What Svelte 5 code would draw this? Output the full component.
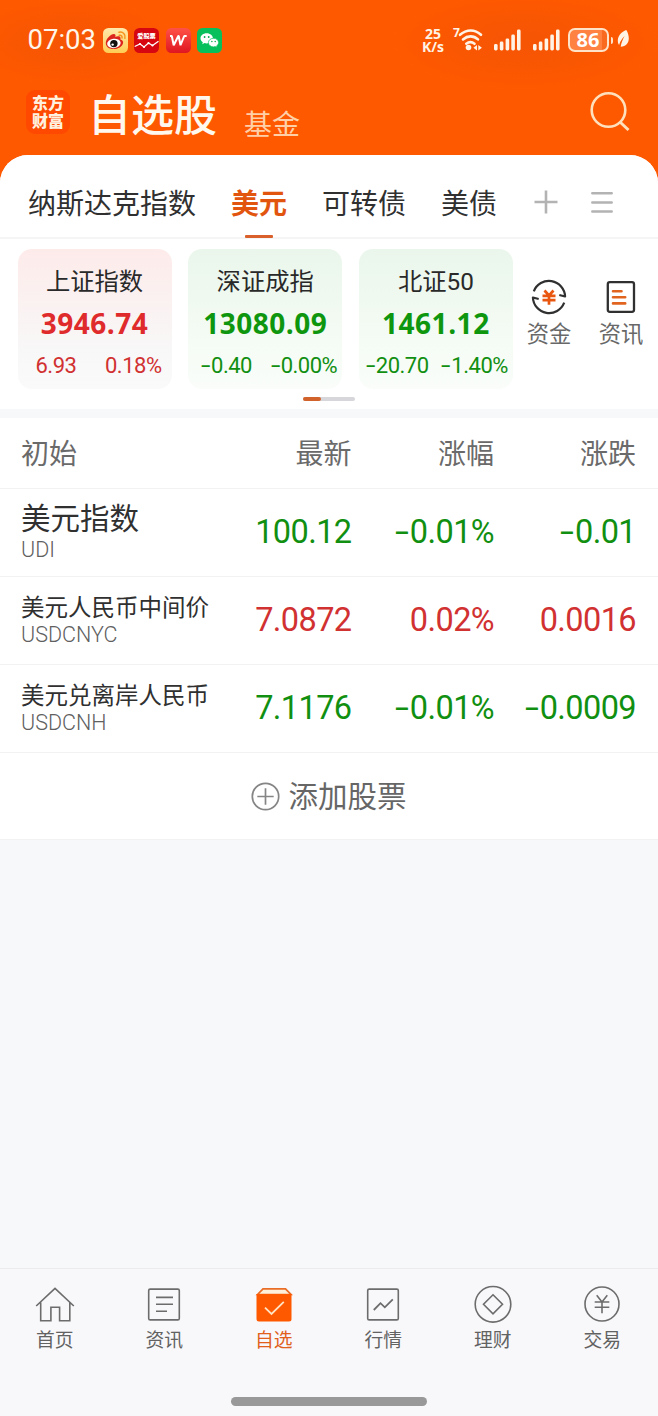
<script>
  const tabs = [
    { name: '纳斯达克指数' },
    { name: '美元', active: true },
    { name: '可转债' },
    { name: '美债' }
  ];
  const indices = [
    { name: '上证指数', value: '3946.74', diff: '6.93', pct: '0.18%', dir: 'up' },
    { name: '深证成指', value: '13080.09', diff: '-0.40', pct: '-0.00%', dir: 'down' },
    { name: '北证50', value: '1461.12', diff: '-20.70', pct: '-1.40%', dir: 'down' }
  ];
  const rows = [
    { name: '美元指数', code: 'UDI', last: '100.12', pct: '-0.01%', diff: '-0.01', dir: 'down', big: true },
    { name: '美元人民币中间价', code: 'USDCNYC', last: '7.0872', pct: '0.02%', diff: '0.0016', dir: 'up' },
    { name: '美元兑离岸人民币', code: 'USDCNH', last: '7.1176', pct: '-0.01%', diff: '-0.0009', dir: 'down' }
  ];
  const nav = ['首页', '资讯', '自选', '行情', '理财', '交易'];
</script>

{#snippet num(v)}{#if v[0] === '-'}<span class="minus">-</span>{v.slice(1)}{:else}{v}{/if}{/snippet}

{#snippet signal()}
  <svg class="signal" width="27" height="22" viewBox="0 0 27 22" fill="#fff3e6">
    <rect x="0" y="15" width="3.6" height="6.5" rx="1.4" /><rect x="5.8" y="12.5" width="3.6" height="9" rx="1.4" />
    <rect x="11.6" y="9.5" width="3.6" height="12" rx="1.4" /><rect x="17.3" y="5.5" width="3.6" height="16" rx="1.4" />
    <rect x="23" y="0.5" width="3.6" height="21" rx="1.4" />
  </svg>
{/snippet}

<div class="screen">
  <header>
    <div class="status">
      <span class="time">07:03</span>
      <div class="apps">
        <svg width="25" height="25" viewBox="0 0 25 25">
          <defs><linearGradient id="wb" x2="0" y2="1"><stop offset="0" stop-color="#ffe9ac" /><stop offset="1" stop-color="#ffcd55" /></linearGradient></defs>
          <rect width="25" height="25" rx="5.5" fill="url(#wb)" />
          <path d="M2.800 15C2.800 10.500 9 5 11.700 6.200c1.200.5.8 2 .6 2.700 2-.9 4.800-.9 5.200.8.200.8-.2 1.400-.1 1.700 2 .7 3 1.800 2.700 3.300C19.500 18.700 15 21 10.500 21S2.800 18.900 2.800 15Z" fill="#dc251c" />
          <ellipse cx="10.900" cy="15.400" rx="6.800" ry="4.700" fill="#fff" transform="rotate(-8 10.900 15.400)" />
          <circle cx="10.900" cy="15.600" r="3.700" fill="#111" /><circle cx="9.600" cy="16.600" r="1.200" fill="#fff" />
          <path d="M16 4.300c3.900-1 6.900 2 5.900 6M16.300 7.300c1.900-.4 3.100.9 2.700 2.700" fill="none" stroke="#f6921e" stroke-width="1.500" stroke-linecap="round" />
        </svg>
        <svg width="25" height="25" viewBox="0 0 25 25">
          <rect width="25" height="25" rx="5.500" fill="#d60710" />
          <text x="12.500" y="10.300" text-anchor="middle" class="tiny">爱股票</text>
          <path d="M.7 18.500 6 16l4 3 4.500-4 4 2.500 6-4.300" fill="none" stroke="#fff" stroke-width="1.300" />
          <g fill="#fff"><circle cx="6" cy="16" r="1.100" /><circle cx="10" cy="19" r="1.100" /><circle cx="14.500" cy="15.200" r="1.100" /><circle cx="18.500" cy="17.500" r="1.100" /></g>
        </svg>
        <svg width="25" height="25" viewBox="0 0 25 25">
          <defs><linearGradient id="wp" x2="0" y2="1"><stop offset="0" stop-color="#ff5148" /><stop offset="1" stop-color="#df1620" /></linearGradient></defs>
          <rect width="25" height="25" rx="5.500" fill="url(#wp)" />
          <path d="M4 8h1.800l1.900 9.200L12.300 8h.4l1.800 9.200L18.200 8h2.500" fill="none" stroke="#fff" stroke-width="2" stroke-linejoin="bevel" />
        </svg>
        <svg width="25" height="25" viewBox="0 0 25 25">
          <rect width="25" height="25" rx="5.500" fill="#07c05b" />
          <path d="M9.700 5.200c-3.600 0-6.200 2.200-6.200 5.100 0 1.700.9 3.100 2.300 4l-.6 2 2.300-1.200c.7.200 1.400.3 2.200.3 3.500 0 6.200-2.300 6.200-5.100s-2.700-5.100-6.200-5.100Z" fill="#fff" />
          <path d="M16.500 10.300c-2.900 0-5.100 1.900-5.100 4.300s2.200 4.300 5.100 4.300c.6 0 1.200-.1 1.700-.3l1.900 1-.5-1.700c1.200-.8 2-2 2-3.300 0-2.400-2.200-4.300-5.100-4.300Z" fill="#fff" stroke="#07c05b" stroke-width=".7" />
          <g fill="#07a94f"><circle cx="7.600" cy="9" r=".9" /><circle cx="11.700" cy="9" r=".9" /><circle cx="14.900" cy="13.500" r=".75" /><circle cx="18.200" cy="13.500" r=".75" /></g>
        </svg>
      </div>
      <div class="speed"><span>25</span><span>K/s</span></div>
      <svg class="wifi" width="30" height="26" viewBox="0 0 30 26" fill="none" stroke="#fff3e6" stroke-width="2.600" stroke-linecap="round">
        <text x="0" y="10" class="seven">7</text>
        <path d="M7 7.800C13.500 2 22 2 28 7.800M10 12.400c4.600-4 10.600-4 15 0M13.300 16.800c2.500-2 5.700-2 8.200 0" />
        <circle cx="15.500" cy="20.500" r="2.800" fill="#fff3e6" stroke="none" />
        <path d="M24 18v5.400l-3.600-2.700ZM25.300 18v5.400l3.600-2.700Z" fill="#fff3e6" stroke="none" />
      </svg>
      {@render signal()}
      {@render signal()}
      <div class="battery"><span>86</span></div>
      <i class="nub"></i>
      <svg class="leaf" width="13" height="18" viewBox="0 0 13 18">
        <path d="M9.300 0C4.500 2 1 5.500.8 10.300c0 2.200.4 3.400 1.300 4.700C3 11.500 5 8.500 7.600 6 6 9 4.300 12.500 3.700 16.800 9 16.500 11.700 13 11.800 8.500c0-3-.8-5.700-2.500-8.500Z" fill="#fff3e6" />
      </svg>
    </div>
    <div class="title">
      <div class="logo"><span>东方</span><span>财富</span></div>
      <h1>自选股</h1>
      <span class="fund">基金</span>
      <svg class="search" width="42" height="42" viewBox="0 0 42 42" fill="none" stroke="#ffe0bd" stroke-width="2.600">
        <circle cx="19.500" cy="19" r="16.800" /><path d="m31 31 8.500 8" stroke-width="3" />
      </svg>
    </div>
  </header>

  <main>
    <nav class="tabs">
      {#each tabs as t}
        <span class="tab" class:active={t.active}>{t.name}</span>
      {/each}
      <svg class="plus" width="24" height="24" viewBox="0 0 24 24" stroke="#b3b3b3" stroke-width="2.600"><path d="M12 .5v23M.5 12h23" /></svg>
      <svg width="22" height="24" viewBox="0 0 22 24" stroke="#b3b3b3" stroke-width="2.500" stroke-linecap="round"><path d="M1.300 3.200h19.400M1.300 12.400h19.400M1.300 21.600h19.400" /></svg>
    </nav>

    <section class="market">
      <div class="cards">
        {#each indices as x}
          <div class="card {x.dir}">
            <div class="iname">{x.name}</div>
            <div class="ivalue">{x.value}</div>
            <div class="ichange"><span>{@render num(x.diff)}</span><span>{@render num(x.pct)}</span></div>
          </div>
        {/each}
        <div class="tool">
          <svg width="38" height="38" viewBox="0 0 38 38" fill="none">
            <path d="M3.800 13.300A16.200 16.200 0 0 1 35.100 18.500l-5.800-1.500M34.200 24.700A16.200 16.200 0 0 1 2.900 19.500l5.800 1.500" stroke="#303030" stroke-width="2.200" stroke-linejoin="round" />
            <path d="m14.500 12.500 4.500 5 4.500-5M12.500 17.800h13M12.500 22.200h13M19 17.500v9.200" stroke="#e8560f" stroke-width="2.700" />
          </svg>
          <span>资金</span>
        </div>
        <div class="tool">
          <svg width="38" height="38" viewBox="0 0 38 38" fill="none">
            <rect x="5.800" y="4.200" width="26.200" height="29.600" rx="2" stroke="#303030" stroke-width="2.300" />
            <path d="M11 13.200h8.500M11 19.300h12.200M11 25.400h12.200" stroke="#e0641e" stroke-width="2.600" stroke-linecap="round" />
          </svg>
          <span>资讯</span>
        </div>
      </div>
      <div class="pager"><i></i></div>
    </section>

    <section class="list">
      <div class="row head"><span>初始</span><span>最新</span><span>涨幅</span><span>涨跌</span></div>
      {#each rows as r}
        <div class="row item {r.dir}">
          <div class="who" class:big={r.big}><b>{r.name}</b><small>{r.code}</small></div>
          <span class="n">{@render num(r.last)}</span>
          <span class="n">{@render num(r.pct)}</span>
          <span class="n">{@render num(r.diff)}</span>
        </div>
      {/each}
      <div class="add">
        <svg width="29" height="29" viewBox="0 0 29 29" fill="none" stroke="#858585" stroke-width="1.700"><circle cx="14.500" cy="14.500" r="13.200" /><path d="M14.500 6.300v16.400M6.300 14.500h16.400" /></svg>
        <span>添加股票</span>
      </div>
    </section>
  </main>

  <footer>
    <div class="bottom">
      {#each nav as label, i}
        <div class="entry" class:on={i === 2}>
          <svg width="40" height="40" viewBox="0 0 40 40" fill="none" stroke="#6c6c6c" stroke-width="1.600">
            {#if i === 0}
              <path d="M1.200 21 20 3.300 38.800 21M5.700 17.500v18.300h10.200V22.200h8.700v13.600h10.200V17.500" />
            {:else if i === 1}
              <rect x="4.700" y="4.100" width="30.600" height="30.800" rx="1.500" /><path d="M12 12.400h17M12 19.300h17M12 26.300h11" />
            {:else if i === 2}
              <path d="M3.500 9.500 9 3.800h22.500l5.500 5.700Z" fill="#fff0dc" stroke="#e96d26" stroke-width="1.700" />
              <path d="M2.500 9h35v25a2.500 2.500 0 0 1-2.500 2.500H5A2.500 2.500 0 0 1 2.500 34Z" fill="#ff5900" stroke="none" />
              <path d="m11 22.700 6.500 6.300 12.300-12.200" stroke="#ffe4c4" stroke-width="1.800" />
            {:else if i === 3}
              <rect x="4.700" y="4.100" width="30.600" height="30.800" rx="1.500" /><path d="m10.800 25 6.700-6.800 4.300 4.100 8-8" stroke-width="1.800" />
            {:else if i === 4}
              <circle cx="20" cy="19.300" r="17.800" /><path d="m20 9.800 9.500 9.500-9.500 9.500-9.500-9.500Z" />
            {:else}
              <circle cx="20" cy="19" r="17" /><path d="m14.700 10.300 5.300 6.700 5.300-6.700M12.700 17h14.600M12.700 22.200h14.600M20 17v11.200" />
            {/if}
          </svg>
          <span>{label}</span>
        </div>
      {/each}
    </div>
    <div class="homebar"></div>
  </footer>
</div>

<style>
  :global(body) { margin: 0; background: #f7f8fa; }
  * { box-sizing: border-box; }
  svg { display: block; flex: none; }
  .screen {
    width: 658px; height: 1416px; display: flex; flex-direction: column; overflow: hidden;
    background: #ff5900; font-family: Roboto, "Noto Sans CJK SC", sans-serif; color: #303030; white-space: nowrap;
  }
  header {
    height: 155px; flex: none;
    background:
      radial-gradient(ellipse 110px 45px at 70px 42px, #f65504 10%, #f6550400 100%),
      radial-gradient(ellipse 140px 50px at 525px 42px, #f65504 10%, #f6550400 100%),
      #ff5900;
  }
  .status { height: 80px; display: flex; align-items: center; padding-left: 27.500px; }
  .time { width: 75px; font-size: 27.500px; line-height: 32px; margin-top: -1px; color: #fff5ea; }
  .apps { display: flex; gap: 6.600px; width: 319px; }
  .tiny { font: 900 6.200px "Noto Sans CJK SC", sans-serif; fill: #fff; }
  .speed { width: 23px; display: flex; flex-direction: column; align-items: center; margin-top: -1px; font: 700 14px/13px "Open Sans", sans-serif; color: #fff3e6; }
  .wifi { margin-left: 8px; overflow: visible; }
  .seven { font: 700 12px/1 "Open Sans", sans-serif; fill: #fff3e6; stroke: none; }
  .signal { margin-left: 12px; }
  .wifi + .signal { margin-left: 11px; }
  .battery {
    margin-left: 8px; width: 41px; height: 24px; border: 2px solid #ffe3c8; border-radius: 7px;
    background: linear-gradient(90deg, #ff8242 86%, #f9691f 86%);
    display: flex; align-items: center; justify-content: center; font: 700 20px/20px "Open Sans", sans-serif; color: #fff;
  }
  .nub { width: 2.500px; height: 7px; margin-left: 2px; background: #ffe3c8; border-radius: 0 2px 2px 0; }
  .leaf { margin-left: 4px; margin-top: -2px; }
  .title { height: 75px; display: flex; align-items: flex-start; padding-left: 26px; }
  .logo {
    width: 44px; height: 44px; margin-top: 10px; border-radius: 9px; background: #ff4800; color: #fff1de;
    display: flex; flex-direction: column; align-items: center; padding-top: 3px;
    font: 900 16px/18px "Noto Sans CJK SC", sans-serif;
  }
  h1 { margin: 4px 0 0 18px; font: 500 43px/56px "Noto Sans CJK SC", sans-serif; color: #fff8ee; }
  .fund { margin: 26px 0 0 27px; font-size: 28px; line-height: 40px; color: #ffd0a8; font-weight: 400; }
  .search { margin: 11px 27px 0 auto; }

  main { flex: 1; background: #f7f8fa; border-radius: 28px 28px 0 0; overflow: hidden; }
  .tabs { height: 84px; display: flex; align-items: center; background: #fff; padding: 11px 0 0 28px; border-bottom: 2px solid #f5f5f6; }
  .tab { height: 72px; font-size: 28px; line-height: 78px; margin-right: 35px; display: flex; flex-direction: column; align-items: center; color: #303030; }
  .tab.active { color: #e2550f; font-weight: 700; }
  .tab.active::after { content: ""; width: 28px; height: 3px; flex: none; margin-top: -9px; background: #d9602a; border-radius: 1px; }
  .plus { margin-right: 33px; margin-left: 2px; margin-top: 1px; }
  .market { height: 170px; background: #fff; padding: 10px 0 0 17.500px; }
  .cards { display: flex; align-items: flex-start; }
  .card { width: 154px; height: 140px; margin-right: 16.700px; border-radius: 14px; display: flex; flex-direction: column; align-items: center; }
  .card.up { background: linear-gradient(#fdebea, #f8f8f8 75%, #fafafa); }
  .card.down { background: linear-gradient(#eaf6eb, #f4fbf4 60%, #fafdfa); }
  .iname { margin-top: 15px; font: 400 24.300px/36px Roboto, "Noto Sans CJK SC", sans-serif; color: #292929; }
  .ivalue { margin-top: 3px; font: 700 28px/40px "Open Sans", sans-serif; letter-spacing: .5px; }
  .up .ivalue { color: #df2b2b; }
  .down .ivalue { color: #0f960f; }
  .ichange { width: 100%; padding: 0 10px 0 18px; margin-top: 8px; display: flex; justify-content: space-between; font-size: 22px; line-height: 30px; letter-spacing: -.5px; }
  .down .ichange { padding: 0 5px 0 13px; }
  .card:nth-child(3) .ichange { padding-left: 7px; }
  .up { color: #d13131; }
  .down { color: #118f11; }
  .minus { display: inline-block; text-align: left; width: .29em; margin-right: .16em; letter-spacing: 0; transform: scaleX(1.550); transform-origin: 0 50%; }
  .tool { width: 72px; margin-top: 29px; display: flex; flex-direction: column; align-items: center; font-size: 22.300px; line-height: 37px; color: #686868; }
  .card + .tool { margin-left: -16.600px; }
  .pager { margin: 8px 0 0 285.500px; width: 52px; height: 4px; border-radius: 2px; background: #d6d6db; }
  .pager i { display: block; width: 17.500px; height: 4px; background: #d2622c; border-radius: 2px; }

  .list { margin-top: 9px; background: #fff; }
  .row { display: grid; grid-template-columns: 190px 140.500px 142.500px 142px; padding: 0 20px 0 21px; align-items: center; border-bottom: 1px solid #f2f2f3; }
  .head { height: 71px; font-size: 28px; color: #6a6a6a; padding-bottom: 3px; }
  .head span:not(:first-child), .n { text-align: right; }
  .item { height: 88px; padding-bottom: 2px; }
  .n { font-size: 32.500px; line-height: 48px; letter-spacing: -.6px; }
  .who { display: flex; flex-direction: column; }
  .who b { font-weight: 400; font-size: 23.500px; line-height: 32px; color: #303030; margin-top: -1px; }
  .who.big b { font-size: 29.500px; line-height: 36px; margin-top: -2px; }
  .who small { font-size: 21.500px; line-height: 23px; margin-top: -1px; color: #606060; font-weight: 300; }
  .who.big small { margin-top: 1px; }
  .add { height: 87px; display: flex; align-items: center; justify-content: center; gap: 8px; font-size: 29.500px; color: #666; border-bottom: 1px solid #f2f2f3; }
  .add span { margin-top: -4px; }

  footer { height: 148px; flex: none; background: #f8f8fb; border-top: 1px solid #ebebee; display: flex; flex-direction: column; align-items: center; }
  .bottom { width: 657px; height: 128px; display: grid; grid-template-columns: repeat(6, 1fr); padding-top: 16px; margin-left: -1px; }
  .entry { display: flex; flex-direction: column; align-items: center; font-size: 18.800px; line-height: 32px; color: #626262; }
  .entry.on { color: #e0601c; }
  .homebar { width: 196px; height: 9px; border-radius: 5px; background: #999; }
</style>
